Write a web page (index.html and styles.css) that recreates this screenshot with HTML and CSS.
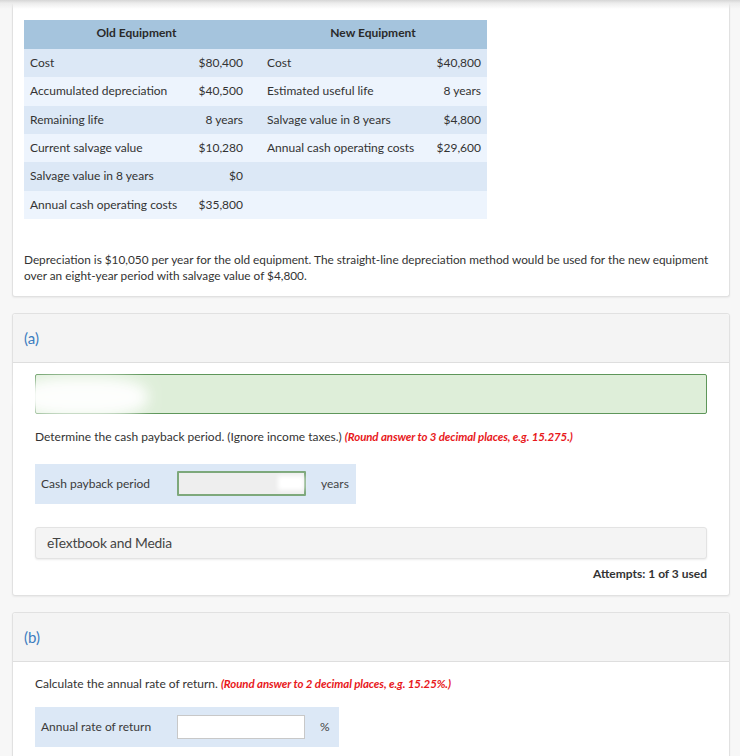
FILE: index.html
```html
<!DOCTYPE html>
<html>
<head>
<meta charset="utf-8">
<link rel="stylesheet" href="styles.css">
</head>
<body>
<div class="topshadow"></div>
<div class="page">
  <section class="card card-first">
    <table class="equip">
      <tr class="head">
        <th colspan="2" class="h-old">Old Equipment</th>
        <th colspan="2" class="h-new">New Equipment</th>
      </tr>
      <tr class="dark">
        <td class="lab">Cost</td><td class="val">$80,400</td>
        <td class="lab2">Cost</td><td class="val2">$40,800</td>
      </tr>
      <tr class="light">
        <td class="lab">Accumulated depreciation</td><td class="val">$40,500</td>
        <td class="lab2">Estimated useful life</td><td class="val2">8 years</td>
      </tr>
      <tr class="dark">
        <td class="lab">Remaining life</td><td class="val">8 years</td>
        <td class="lab2">Salvage value in 8 years</td><td class="val2">$4,800</td>
      </tr>
      <tr class="light">
        <td class="lab">Current salvage value</td><td class="val">$10,280</td>
        <td class="lab2">Annual cash operating costs</td><td class="val2">$29,600</td>
      </tr>
      <tr class="dark">
        <td class="lab">Salvage value in 8 years</td><td class="val">$0</td>
        <td class="lab2"></td><td class="val2"></td>
      </tr>
      <tr class="light">
        <td class="lab">Annual cash operating costs</td><td class="val">$35,800</td>
        <td class="lab2"></td><td class="val2"></td>
      </tr>
    </table>
    <p class="desc">Depreciation is $10,050 per year for the old equipment. The straight-line depreciation method would be used for the new equipment over an eight-year period with salvage value of $4,800.</p>
  </section>

  <section class="card part">
    <div class="part-head">(a)</div>
    <div class="part-body">
      <div class="feedback"><span class="smudge"></span></div>
      <p class="q">Determine the cash payback period. (Ignore income taxes.) <em class="hint">(Round answer to 3 decimal places, e.g. 15.275.)</em></p>
      <div class="answer">
        <span class="ans-label">Cash payback period</span>
        <span class="input input-done"><span class="smudge2"></span></span>
        <span class="unit">years</span>
      </div>
      <div class="media">eTextbook and Media</div>
      <div class="attempts">Attempts: 1 of 3 used</div>
    </div>
  </section>

  <section class="card part">
    <div class="part-head">(b)</div>
    <div class="part-body part-body-b">
      <p class="q q-first">Calculate the annual rate of return. <em class="hint">(Round answer to 2 decimal places, e.g. 15.25%.)</em></p>
      <div class="answer answer-b">
        <span class="ans-label">Annual rate of return</span>
        <span class="input"></span>
        <span class="unit">%</span>
      </div>
    </div>
  </section>
</div>
</body>
</html>
```

FILE: styles.css
```css
html, body {
  margin: 0;
  padding: 0;
  background: #f7f7f7;
  font-family: Lato, "Open Sans", sans-serif;
  color: #333;
  font-size: 12px;
}
.topshadow {
  position: absolute;
  left: 0;
  top: 0;
  width: 740px;
  height: 9px;
  background: linear-gradient(#d6d6d6, #ececec 35%, rgba(255,255,255,0));
  z-index: 5;
}
.page {
  width: 718px;
  padding-left: 12px;
}
.card {
  background: #fff;
  border: 1px solid #e1e1e1;
  border-radius: 3px;
  box-shadow: 0 1px 2px rgba(0,0,0,0.06);
}
.card-first {
  border-top: none;
  border-radius: 0 0 3px 3px;
  padding: 20px 4px 12px 11px;
}
.equip {
  border-collapse: collapse;
  width: 463px;
}
.equip tr.head { height: 29px; }
.equip tr.dark, .equip tr.light { height: 28.33px; }
.equip th {
  background: #a5c4dd;
  padding: 0 0 3px 0;
  line-height: 14px;
  font-weight: 700;
  color: #2a2a2a;
  font-size: 12px;
  text-align: center;
}
.equip .h-new { padding-left: 10px; }
.equip td {
  padding: 0;
  line-height: 14px;
  white-space: nowrap;
  vertical-align: middle;
}
.equip tr.dark td { background: #dce8f6; }
.equip tr.light td { background: #edf4fd; }
.equip .lab { padding-left: 6px; width: 155px; }
.equip .val { text-align: right; padding-right: 6px; width: 58px; }
.equip .lab2 { padding-left: 18px; width: 150px; }
.equip .val2 { text-align: right; padding-right: 6px; }
.desc {
  margin: 33px 0 0 0;
  line-height: 16px;
  font-size: 11.8px;
  color: #333;
}
.part {
  margin-top: 16px;
}
.part-head {
  background: #f4f4f4;
  height: 48px;
  line-height: 48px;
  border-bottom: 1px solid #dedede;
  padding-left: 11px;
  font-size: 15px;
  color: #3b7cc0;
  border-radius: 3px 3px 0 0;
}
.part-body {
  padding: 11px 22px 14px 22px;
}
.feedback {
  position: relative;
  height: 38px;
  background: #deeed9;
  border: 1px solid #5e965a;
  border-radius: 2px;
}
.smudge {
  position: absolute;
  left: -18px;
  top: 2px;
  width: 130px;
  height: 40px;
  background: #fff;
  border-radius: 40%;
  filter: blur(7px);
  opacity: 0.95;
}
.q {
  margin: 15px 0 0 0;
  line-height: 16px;
  font-size: 12px;
}
.q-first {
  margin-top: 0;
}
.hint {
  color: #e8181b;
  font-weight: 700;
  font-style: italic;
  font-size: 11.5px;
  letter-spacing: -0.1px;
}
.answer {
  margin-top: 19px;
  width: 321px;
  height: 40px;
  background: #dce8f6;
  display: flex;
  align-items: center;
}
.ans-label {
  width: 136px;
  padding-left: 6px;
  color: #3a3a3a;
}
.input {
  position: relative;
  width: 126px;
  height: 22px;
  background: #fff;
  border: 1px solid #c8c8c8;
}
.input-done {
  background: #eeeeee;
  border: 2px solid #7da87b;
  width: 125px;
  height: 21px;
  border-radius: 1px;
}
.smudge2 {
  position: absolute;
  right: 0;
  top: 3px;
  width: 26px;
  height: 14px;
  background: #fff;
  filter: blur(2px);
}
.unit {
  margin-left: 15px;
  color: #444;
}
.media {
  margin-top: 23px;
  height: 30px;
  line-height: 30px;
  background: #f4f4f4;
  border: 1px solid #e3e3e3;
  border-radius: 3px;
  box-shadow: 0 1px 2px rgba(0,0,0,0.08);
  padding-left: 11px;
  font-size: 13.8px;
  color: #444;
  letter-spacing: -0.2px;
}
.attempts {
  margin-top: 8px;
  text-align: right;
  font-weight: 700;
  font-size: 12px;
  line-height: 14px;
  color: #333;
}
.part-body-b {
  padding-top: 14px;
  padding-bottom: 40px;
}
.answer-b {
  margin-top: 15px;
  width: 304px;
}
```
